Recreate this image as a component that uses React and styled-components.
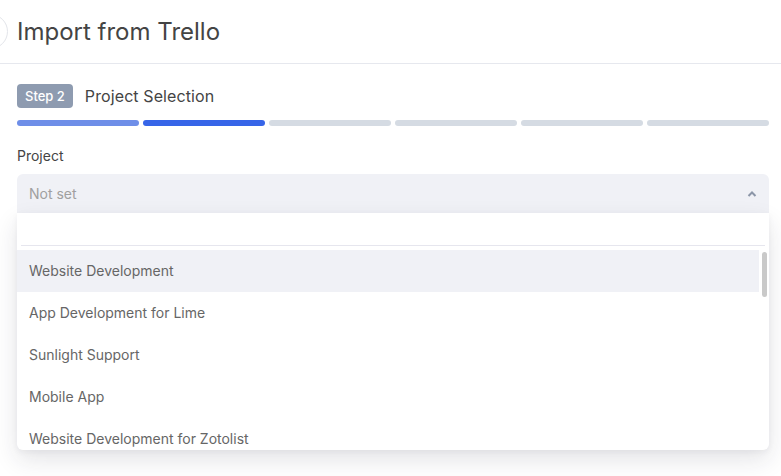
import React from "react";
import styled, { createGlobalStyle } from "styled-components";

const projects = [
  "Website Development",
  "App Development for Lime",
  "Sunlight Support",
  "Mobile App",
  "Website Development for Zotolist",
];

const GlobalStyle = createGlobalStyle`
  body {
    margin: 0;
    background: #ffffff;
    font-family: Inter, "Noto Sans", sans-serif;
    color: #333;
    overflow: hidden;
  }
`;

const Page = styled.div`
  width: 781px;
  height: 476px;
  overflow: hidden;
`;

const Header = styled.header`
  display: flex;
  align-items: center;
  height: 63px;
  padding-left: 17px;
  border-bottom: 1px solid #e6e8ee;
  position: relative;
`;

const BackCircle = styled.div`
  position: absolute;
  left: -27px;
  top: 14px;
  width: 33px;
  height: 33px;
  border-radius: 50%;
  border: 1px solid #e3e5ea;
`;

const Title = styled.h1`
  margin: 0;
  font-size: 24px;
  font-weight: 400;
  color: #444;
`;

const Body = styled.main`
  padding: 20px 12px 0 17px;
`;

const StepRow = styled.div`
  display: flex;
  align-items: center;
  gap: 12px;
`;

const Badge = styled.span`
  display: inline-flex;
  align-items: center;
  height: 24px;
  padding: 0 8px;
  border-radius: 4px;
  background: #8e9bb0;
  color: #fff;
  font-size: 13px;
  font-weight: 500;
`;

const StepTitle = styled.span`
  font-size: 16px;
  color: #444;
  letter-spacing: 0.1px;
`;

const Bars = styled.div`
  display: grid;
  grid-template-columns: repeat(6, 1fr);
  gap: 4px;
  margin-top: 12px;
`;

const Bar = styled.div`
  height: 6px;
  border-radius: 3px;
  background: ${(p) =>
    p.$state === "done" ? "#6e8ee8" : p.$state === "active" ? "#3765e8" : "#d5dbe3"};
`;

const Label = styled.div`
  margin-top: 20px;
  font-size: 14px;
  line-height: 20px;
  color: #444;
`;

const Field = styled.div`
  position: relative;
  margin-top: 8px;
`;

const Select = styled.div`
  display: flex;
  align-items: center;
  justify-content: space-between;
  height: 39px;
  padding: 0 12px;
  background: #f0f1f6;
  border-radius: 6px 6px 0 0;
  font-size: 14px;
  color: #a0a0a0;
`;

const Dropdown = styled.div`
  position: absolute;
  left: 0;
  right: 0;
  top: 39px;
  background: #fff;
  border-radius: 0 0 6px 6px;
  box-shadow: 0 10px 24px rgba(30, 35, 60, 0.12), 0 2px 6px rgba(30, 35, 60, 0.05);
  overflow: hidden;
`;

const Search = styled.input`
  display: block;
  width: 100%;
  height: 32px;
  box-sizing: border-box;
  border: 0;
  outline: none;
  padding: 0 12px;
  font: inherit;
  font-size: 14px;
  background: transparent;
`;

const Divider = styled.div`
  height: 1px;
  margin: 0 4px;
  background: #e6e6ee;
`;

const List = styled.ul`
  position: relative;
  list-style: none;
  margin: 0;
  padding: 4px 10px 0 0;
  height: 200px;
  overflow: hidden;
`;

const ScrollThumb = styled.div`
  position: absolute;
  right: 2px;
  top: 6px;
  width: 5px;
  height: 45px;
  border-radius: 3px;
  background: #c9c9c9;
`;

const Item = styled.li`
  display: flex;
  align-items: center;
  height: 42px;
  padding: 0 12px 1px;
  box-sizing: border-box;
  font-size: 14px;
  color: #666;
  background: ${(p) => (p.$active ? "#f0f1f6" : "transparent")};
`;

const Chevron = () => (
  <svg width="10" height="8" viewBox="0 0 10 8">
    <polyline points="1.5,6 5,2.5 8.5,6" fill="none" stroke="#8c96a8" strokeWidth="2" />
  </svg>
);

export default function App() {
  const steps = ["done", "active", "todo", "todo", "todo", "todo"];
  return (
    <Page>
      <GlobalStyle />
      <Header>
        <BackCircle />
        <Title>Import from Trello</Title>
      </Header>
      <Body>
        <StepRow>
          <Badge>Step 2</Badge>
          <StepTitle>Project Selection</StepTitle>
        </StepRow>
        <Bars>
          {steps.map((s, i) => (
            <Bar key={i} $state={s} />
          ))}
        </Bars>
        <Label>Project</Label>
        <Field>
          <Select>
            <span>Not set</span>
            <Chevron />
          </Select>
          <Dropdown>
            <Search />
            <Divider />
            <List>
              {projects.map((p, i) => (
                <Item key={p} $active={i === 0}>
                  {p}
                </Item>
              ))}
              <ScrollThumb />
            </List>
          </Dropdown>
        </Field>
      </Body>
    </Page>
  );
}
